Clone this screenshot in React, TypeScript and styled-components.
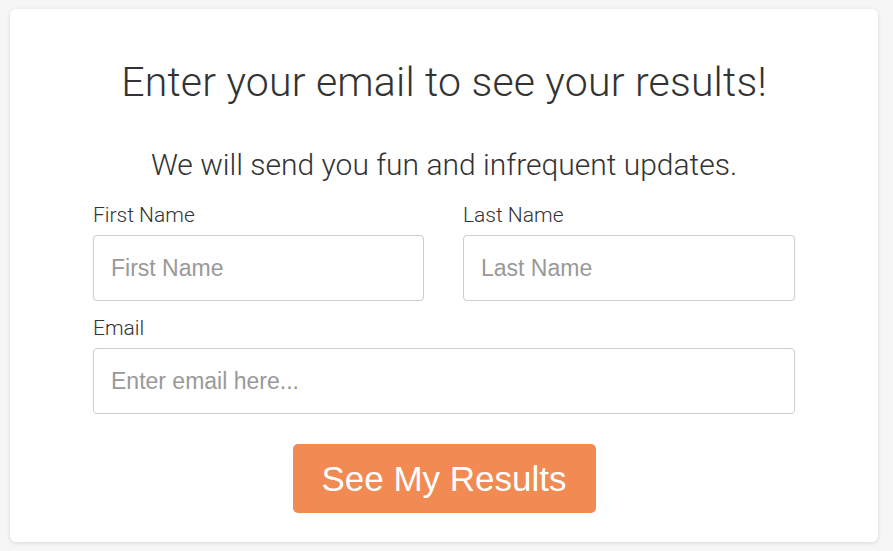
import React from 'react';
import styled, { createGlobalStyle } from 'styled-components';

const GlobalStyle = createGlobalStyle`
	html, body {
		margin: 0;
		padding: 0;
		background: #f6f6f6;
	}
	* {
		box-sizing: border-box;
	}
`;

const Page = styled.div`
	width: 893px;
	height: 551px;
	padding: 9px 15px 9px 10px;
`;

const Card = styled.div`
	width: 868px;
	height: 533px;
	background: #ffffff;
	border-radius: 6px;
	box-shadow: 0 1px 4px rgba(0, 0, 0, 0.12);
	padding: 49px 0 0;
	display: flex;
	flex-direction: column;
	align-items: center;
	font-family: 'Liberation Sans', Arial, sans-serif;
	color: #333333;
`;

const Title = styled.h1`
	margin: 0;
	font-family: Roboto, 'Liberation Sans', sans-serif;
	font-weight: 300;
	font-size: 41px;
	line-height: 48px;
	color: #333333;
	letter-spacing: 0.2px;
`;

const Subtitle = styled.p`
	margin: 42px 0 0;
	font-family: Roboto, 'Liberation Sans', sans-serif;
	font-weight: 300;
	font-size: 30px;
	line-height: 34px;
	color: #333333;
`;

const Form = styled.form`
	width: 702px;
	margin-top: 22px;
	display: flex;
	flex-direction: column;
	gap: 16px;
`;

const Row = styled.div`
	display: grid;
	grid-template-columns: 331px 332px;
	column-gap: 39px;
`;

const Field = styled.div`
	display: flex;
	flex-direction: column;
	gap: 9px;
`;

const Label = styled.label`
	font-family: Roboto, 'Liberation Sans', sans-serif;
	font-weight: 300;
	font-size: 21px;
	line-height: 22px;
	color: #333333;
`;

const Input = styled.input`
	height: 66px;
	width: 100%;
	border: 1px solid #cccccc;
	border-radius: 4px;
	padding: 0 17px;
	font-family: 'Liberation Sans', Arial, sans-serif;
	font-size: 23px;
	color: #333333;
	outline: none;
	background: #ffffff;
	&::placeholder {
		color: #999999;
	}
`;

const Submit = styled.button`
	align-self: center;
	margin-top: 14px;
	width: 303px;
	height: 69px;
	border: none;
	border-radius: 5px;
	background: #f28a53;
	color: #ffffff;
	font-family: 'Liberation Sans', Arial, sans-serif;
	font-size: 35px;
	cursor: pointer;
`;

const App = () => {
	return (
		<>
			<GlobalStyle />
			<Page>
				<Card>
					<Title>Enter your email to see your results!</Title>
					<Subtitle>We will send you fun and infrequent updates.</Subtitle>
					<Form onSubmit={(e) => e.preventDefault()}>
						<Row>
							<Field>
								<Label>First Name</Label>
								<Input placeholder="First Name" />
							</Field>
							<Field>
								<Label>Last Name</Label>
								<Input placeholder="Last Name" />
							</Field>
						</Row>
						<Field>
							<Label>Email</Label>
							<Input placeholder="Enter email here..." />
						</Field>
						<Submit type="submit">See My Results</Submit>
					</Form>
				</Card>
			</Page>
		</>
	);
};

export default App;
